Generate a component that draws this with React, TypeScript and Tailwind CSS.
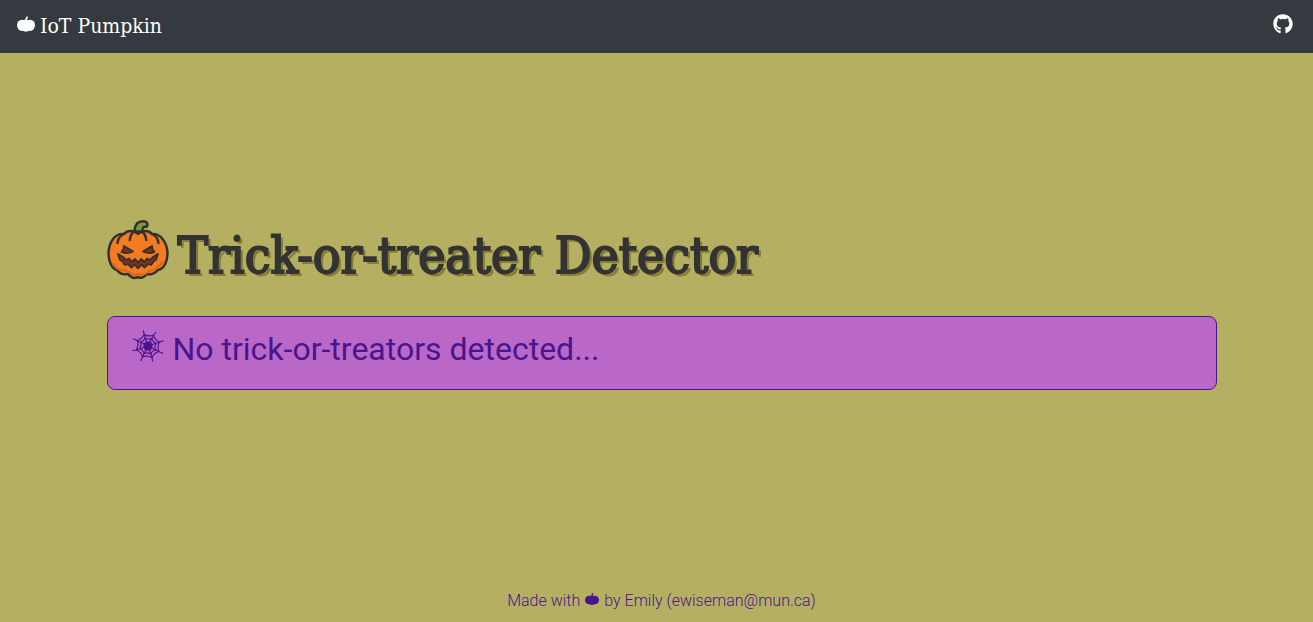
import { FaGithub } from "react-icons/fa";

function PumpkinIcon({ className }: { className: string }) {
  return (
    <svg viewBox="0 0 18 16" fill="currentColor" aria-hidden="true" className={className}>
      <path d="M8.2 4C8.3 2.4 8.8 1 10 .2L11.2 1C10.4 1.8 10.1 2.8 10.1 3.9Z" />
      <ellipse cx="5" cy="9.3" rx="5" ry="5.6" />
      <ellipse cx="9" cy="9.6" rx="5" ry="6.2" />
      <ellipse cx="13" cy="9.3" rx="5" ry="5.6" />
    </svg>
  );
}

function JackOLantern({ className }: { className: string }) {
  return (
    <svg viewBox="0 0 62 60" aria-hidden="true" className={className}>
      <g stroke="#303030" strokeWidth="2.4" strokeLinejoin="round" strokeLinecap="round">
        <path
          fill="#f47b20"
          d="M31 14C35 10 42 10 45 14C53 13 60 22 60.500 33C60.500 42 57 49 51 50C48 54 43 55 40 54C37 58 33 58.500 31 57C28 58.500 24 58 21 54C17 55 13 54 10 50C5 49 1.500 42 1.500 33C2 22 8 13 17 14C20 10 27 10 31 14Z"
        />
        <path fill="none" d="M17 14C13.500 15.500 11 19 10.500 23M45 14C48.500 15.500 51 19 51.500 23M26.500 12C24 14 23 18 22.800 20M35.500 12C38 14 39 18 39.200 20" />
        <path fill="#789b35" d="M27.500 10.500C28 5 31 1.300 36 1.300C41 1.300 41.500 5.500 39 7C36.500 6 35.500 7.500 35.500 10.500Q31 12.500 27.500 10.500Z" />
      </g>
      <path d="M6 43Q9 49 14 50Q19 50 22 52Q27 56 31 54Q38 56 42 51Q51 50 56 41" fill="none" stroke="#d8661c" strokeWidth="2" />
      <g fill="#84331b" stroke="#303030" strokeWidth="1.800" strokeLinejoin="round">
        <path d="M17 26L26 31.500Q20.500 34.500 14.500 32Q17 30 17 26Z" />
        <path d="M45 26L36 31.500Q41.500 34.500 47.500 32Q45 30 45 26Z" />
        <path d="M11 34L16 37L19 40L22 38.500L24.500 42L28 39L31 42.500L34 39L37.500 42L40 38.500L43 40L46 37L51 34L49 40L47 41L44 45L41 44L37.500 47.500L34.500 44.500L31 48.500L27.500 44.500L24.500 47.500L21 44L18 45L15 41L13 40Z" />
      </g>
    </svg>
  );
}

function SpiderWeb({ className }: { className: string }) {
  return (
    <svg viewBox="0 0 32 32" fill="none" stroke="currentColor" strokeWidth="1.200" aria-hidden="true" className={className}>
      <path d="M16 16L12.200 4.500L11.300 .5M16 16L21.500 5.200L24 2M16 16L27.500 12L31.700 10.700M16 16L26.800 21.500L31 23.500M16 16L20 27.500L20.700 31.500M16 16L10.500 26.800L8.700 31M16 16L4.500 20L.5 20.500M16 16L5.200 10.500L1 8.700" />
      <path d="M12.200 4.500Q17 7 21.500 5.200Q23 10.300 27.500 12Q25 17 26.800 21.500Q22 23 20 27.500Q15 25 10.500 26.800Q9 22 4.500 20Q7 15 5.200 10.500Q10 9 12.200 4.500Z" />
      <path d="M13.500 8Q17 9.800 19.800 8.600Q21 12 24 13.500Q22.200 17 23.400 19.800Q20 21 18.500 24Q15 22.200 12.200 23.400Q11 20 8 18.500Q9.800 15 8.600 12.200Q12 11 13.500 8Z" />
      <path fill="currentColor" d="M14.500 12L18.200 12.200L20 14.500L19.800 18L17.500 20L13.800 19.800L12 17.500L12.200 13.800Z" />
    </svg>
  );
}

export default function App() {
  return (
    <div className="flex min-h-screen flex-col bg-[#b5b061] font-['Roboto','Liberation_Sans',sans-serif] text-[#4a148c]">
      <header className="flex items-center justify-between bg-[#343a40] px-4 pt-2 pb-[9px] text-white">
        <a href="#" className="flex items-center gap-1 font-['Roboto_Slab','DejaVu_Serif_Condensed','DejaVu_Serif',serif] text-[21px] leading-9">
          <PumpkinIcon className="mb-1 h-4 w-5" />
          <span>IoT Pumpkin</span>
        </a>
        <a href="#" aria-label="GitHub" className="mr-1 mb-1">
          <FaGithub className="size-5" />
        </a>
      </header>
      <main className="flex grow flex-col justify-center pb-8 pl-2.5">
        <div className="mx-auto w-full max-w-[1110px]">
          <h1 className="mb-7 flex items-end gap-[9px] font-['Roboto_Slab','DejaVu_Serif_Condensed','DejaVu_Serif',serif] text-[51px] leading-[64px] font-normal text-[#333333] [-webkit-text-stroke:2px_#333333] [text-shadow:3px_3px_0_#857d32]">
            <JackOLantern className="mb-2 h-15 w-[62px] shrink-0" />
            <span>Trick-or-treater Detector</span>
          </h1>
          <section className="flex items-start gap-[9px] rounded-lg border border-[#4a148c] bg-[#ba68c8] px-6 pt-3 pb-5">
            <SpiderWeb className="mt-px size-8 shrink-0" />
            <p className="text-[32px] leading-10">No trick-or-treators detected...</p>
          </section>
        </div>
      </main>
      <footer className="flex items-center justify-center gap-[5px] pb-[9px] pl-2.5 text-base font-light">
        <span>Made with</span>
        <PumpkinIcon className="mb-1 h-3.5 w-3.5" />
        <span>by Emily (ewiseman@mun.ca)</span>
      </footer>
    </div>
  );
}
